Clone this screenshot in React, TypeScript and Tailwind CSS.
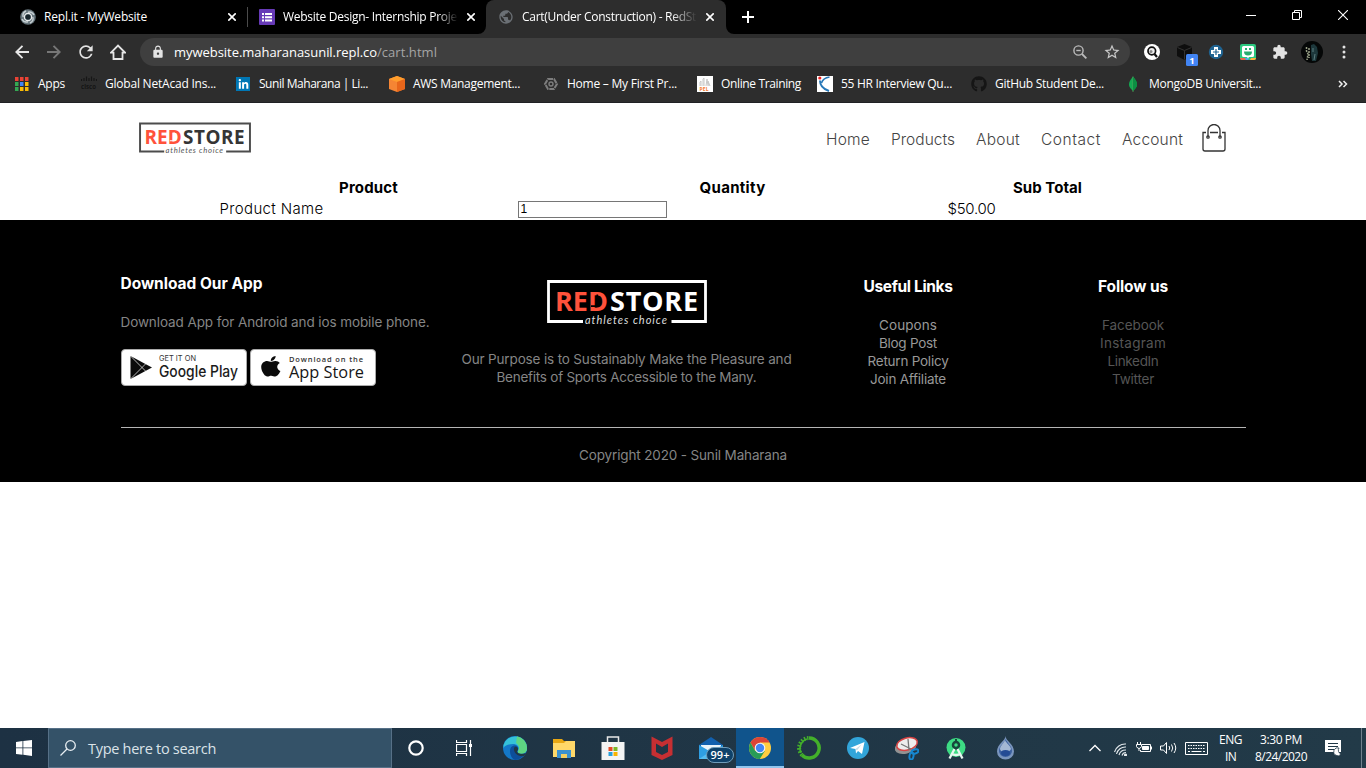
import React, { useLayoutEffect, useRef } from "react";
import { FaGithub, FaLinkedinIn } from "react-icons/fa";
import { MdExtension, MdLock, MdRefresh, MdStarBorder, MdPublic } from "react-icons/md";

/* Single-line label whose tracking is computed so that it fills a given width. */
function Fit({ w, className = "", children }: { w: number; className?: string; children: string }) {
  const ref = useRef<HTMLSpanElement>(null);
  useLayoutEffect(() => {
    const el = ref.current;
    if (!el) return;
    el.style.letterSpacing = "0px";
    const natural = el.getBoundingClientRect().width;
    el.style.letterSpacing = `${(w - natural) / children.length}px`;
  }, [w, children]);
  return (
    <span className={"block shrink-0 overflow-visible whitespace-nowrap " + className} style={{ width: w }}>
      <span ref={ref} className="inline-block">{children}</span>
    </span>
  );
}

const X = ({ className = "" }) => (
  <svg className={"size-2 shrink-0 " + className} viewBox="0 0 8 8" stroke="#fff" strokeWidth="1.6">
    <path d="M.3 .3 7.7 7.7M7.7 .3 .3 7.7" />
  </svg>
);

function TabStrip() {
  return (
    <div className="flex h-[34px] items-center bg-black text-white">
      <svg className="ml-5 size-4 shrink-0" viewBox="0 0 16 16">
        <circle cx="8" cy="8" r="7.8" fill="#65747b" />
        <path d="M8 3.200Q12 2 14 6M12.800 8Q14 12 10 14M8 12.800Q4 14 2 10M3.200 8Q2 4 6 2" fill="none" stroke="#c5ced1" strokeWidth="1.500" />
        <circle cx="8" cy="8" r="3.600" fill="none" stroke="#e8eced" strokeWidth="1.300" />
        <circle cx="8" cy="8" r="2.600" fill="#17252b" />
      </svg>
      <Fit w={103} className="ml-2">Repl.it - MyWebsite</Fit>
      <X className="ml-[81px]" />
      <div className="ml-[11px] h-5 w-px bg-[#4b4b4b]" />
      <svg className="ml-[11px] size-4 shrink-0" viewBox="0 0 16 16">
        <rect width="16" height="16" rx="1" fill="#673ab7" />
        <path d="M3 4h2v2H3zM3 7.2h2v2H3zM3 10.4h2v2H3zM6 4h7v2H6zM6 7.2h7v2H6zM6 10.4h7v2H6z" fill="#fff" />
      </svg>
      <div className="ml-2 w-[175px] overflow-hidden [mask-image:linear-gradient(to_right,#000_88%,transparent)]">
        <Fit w={174}>Website Design- Internship Proje</Fit>
      </div>
      <X className="ml-[9px]" />
      <svg className="ml-[3px] h-[34px] w-2 shrink-0" viewBox="0 0 8 34"><path d="M8 26v8H0a8 8 0 0 0 8-8z" fill="#2d2d2d" /></svg>
      <div className="flex h-full w-60 shrink-0 items-center rounded-t-lg bg-[#2d2d2d]">
        <MdPublic className="ml-3 size-4 shrink-0 text-[#6b7075]" />
        <div className="ml-2 w-[175px] overflow-hidden [mask-image:linear-gradient(to_right,#000_85%,transparent)]">
          <Fit w={174}>Cart(Under Construction) - RedSt</Fit>
        </div>
        <X className="ml-[9px]" />
      </div>
      <svg className="h-[34px] w-2 shrink-0" viewBox="0 0 8 34"><path d="M0 26v8h8a8 8 0 0 1-8-8z" fill="#2d2d2d" /></svg>
      <svg className="ml-2 size-3 shrink-0" viewBox="0 0 12 12"><path d="M6 0v12M0 6h12" stroke="#fff" strokeWidth="2" /></svg>
      <div className="ml-auto mb-[5px] flex items-center gap-9 pr-[18px]">
        <svg className="size-[10px]" viewBox="0 0 10 10"><path d="M0 5.5h10" stroke="#fff" /></svg>
        <svg className="size-[10px]" viewBox="0 0 10 10" fill="none" stroke="#fff"><path d="M.5 2.5h7v7h-7zM2.5 2.5v-2h7v7h-2" /></svg>
        <svg className="size-[10px]" viewBox="0 0 10 10"><path d="M0 0l10 10M10 0L0 10" stroke="#fff" strokeWidth="1.1" /></svg>
      </div>
    </div>
  );
}

function Toolbar() {
  return (
    <div className="flex h-9 items-center bg-[#2d2d2d] text-[#e3e3e3]">
      <svg className="ml-[15px] size-[14px] shrink-0" viewBox="0 0 14 14" fill="none" stroke="#e6e6e6" strokeWidth="1.9"><path d="M14 7H1.5M7.5.8 1.3 7l6.2 6.2" /></svg>
      <svg className="ml-[18px] size-[14px] shrink-0" viewBox="0 0 14 14" fill="none" stroke="#777" strokeWidth="1.9"><path d="M0 7h12.5M6.5.8 12.7 7l-6.2 6.2" /></svg>
      <MdRefresh className="ml-[15px] size-5 shrink-0" />
      <svg className="ml-[14px] size-4 shrink-0" viewBox="0 0 16 16" fill="none" stroke="#e6e6e6" strokeWidth="1.8"><path d="M1 8.6 8 1.6l7 7h-2.5V15h-9V8.6z" /></svg>
      <div className="ml-[14px] flex h-7 w-[990px] shrink-0 items-center rounded-full bg-[#3f3f3f]">
        <MdLock className="ml-[11px] size-[14px] shrink-0" />
        <Fit w={203} className="ml-[9px] text-[13px] text-white">mywebsite.maharanasunil.repl.co</Fit>
        <Fit w={60} className="text-[13px] text-[#a5a5a5]">/cart.html</Fit>
        <svg className="ml-auto size-[14px] shrink-0" viewBox="0 0 14 14" fill="none" stroke="#bbb" strokeWidth="1.4"><circle cx="5.5" cy="5.5" r="4.6" /><path d="M3.3 5.5h4.4" /><path d="M9 9l4.4 4.4" strokeWidth="1.8" /></svg>
        <MdStarBorder className="ml-4 mr-[9px] size-[18px] shrink-0 text-[#c8c8c8]" />
      </div>
      <svg className="ml-[14px] size-4 shrink-0" viewBox="0 0 16 16"><circle cx="8" cy="8" r="8" fill="#fff" /><circle cx="7.8" cy="7" r="3.8" fill="#eee" stroke="#111" strokeWidth="1.7" /><path d="M10.5 10 13 13" stroke="#111" strokeWidth="2.2" /><circle cx="7" cy="7.4" r="1.5" fill="#888" /></svg>
      <svg className="ml-[17px] mt-1 h-6 w-[22px] shrink-0" viewBox="0 0 22 24">
        <path d="M0 5 7.500 2 15 5v9l-7.500 4L0 14z" fill="#0e0e0e" /><path d="M.500 5.500l7 3 7-3M7.500 8.500v9" stroke="#333" fill="none" />
        <rect x="9" y="12" width="12" height="12" rx="1.500" fill="#4285f4" />
        <text x="15" y="21.500" textAnchor="middle" fontSize="9.500" fontWeight="700" fill="#fff" fontFamily="Open Sans">1</text>
      </svg>
      <svg className="ml-[9px] size-4 shrink-0" viewBox="0 0 16 16"><circle cx="8" cy="8" r="7.200" fill="#1f6391" /><path d="M6 3h4v3h3v4h-3v3H6v-3H3V6h3z" fill="#fff" /><path d="M8 5v6M5 8h6" stroke="#1f6391" strokeWidth="1.200" /></svg>
      <svg className="ml-4 size-4 shrink-0" viewBox="0 0 16 16"><rect width="16" height="16" rx="2" fill="#2bc77e" /><path d="M0 14h5l1 2H2q-2 0-2-2z" fill="#eb6549" /><path d="M5 14h4l-1 2H6z" fill="#49a7ee" /><path d="M11 14h5q0 2-2 2h-4z" fill="#ffb13b" /><path d="M3.500 2h9Q14 2 14 3.500v8q0 1.500-1.500 1.500H9l-1 1.500L7 13H3.500Q2 13 2 11.500v-8Q2 2 3.500 2z" fill="#fff" /><path d="M5 4h2v2H5zM9 4h2v2H9zM4 7.500h8a4 4 0 0 1-8 0z" fill="#27ad70" /></svg>
      <MdExtension className="ml-4 size-4 shrink-0" />
      <svg className="ml-[13px] size-[22px] shrink-0" viewBox="0 0 22 22"><circle cx="11" cy="11" r="11" fill="#050707" /><path d="M10 4l3-1 3 3 1 6-2 8h-4l-1-7z" fill="#1d383c" /><path d="M5.500 6v4l1.500 3-1 6M8 7v10" stroke="#98a086" strokeWidth="1.500" strokeDasharray="2 1" fill="none" /><path d="M12 7v4M14 13l-1 6" stroke="#5c7d7f" /></svg>
      <svg className="ml-[19px] h-4 w-1 shrink-0" viewBox="0 0 4 16" fill="#e3e3e3"><circle cx="2" cy="3" r="1.500" /><circle cx="2" cy="8" r="1.500" /><circle cx="2" cy="13" r="1.500" /></svg>
    </div>
  );
}

function AppsIcon() {
  const colors = ["#ea4335", "#ea4335", "#ea4335", "#34a853", "#4285f4", "#fbbc05", "#34a853", "#fbbc05", "#fbbc05"];
  return (
    <svg className="size-4 shrink-0" viewBox="0 0 16 16">
      {colors.map((c, i) => <rect key={i} x={1 + (i % 3) * 5} y={1 + Math.floor(i / 3) * 5} width="3.500" height="4" fill={c} />)}
    </svg>
  );
}

const bookmarks: { icon: React.ReactNode; w: number; label: string; ml: string }[] = [
  { ml: "ml-[14px]", w: 27, label: "Apps", icon: <AppsIcon /> },
  { ml: "ml-4", w: 111, label: "Global NetAcad Ins...", icon: (
    <svg className="size-4 shrink-0" viewBox="0 0 16 16"><path d="M.500 3v2M3 2v3M5.500 .500v4.500M8 2v3M10.500 .500v4.500M13 2v3M15.500 3v2" stroke="#161616" strokeWidth="1.200" /><text x="0" y="12.500" fontSize="7" fontWeight="700" textLength="15" lengthAdjust="spacingAndGlyphs" fill="#151515" fontFamily="Open Sans">cisco</text></svg>) },
  { ml: "ml-[19px]", w: 109, label: "Sunil Maharana | Li...", icon: <span className="flex size-4 shrink-0 items-center justify-center"><span className="flex size-[14px] items-center justify-center bg-[#0077b5]"><FaLinkedinIn className="size-[11px] text-white" /></span></span> },
  { ml: "ml-[21px]", w: 107, label: "AWS Management...", icon: (
    <svg className="size-4 shrink-0" viewBox="0 0 16 16"><path d="M0 3 8 0l8 3v10l-8 3-8-3z" fill="#f58534" /><path d="M0 3l8 3 8-3-8-3z" fill="#ff9d2c" /><path d="M8 6l8-3v10l-8 3z" fill="#e8661b" /></svg>) },
  { ml: "ml-[23px]", w: 110, label: "Home – My First Pr...", icon: (
    <svg className="size-4 shrink-0" viewBox="0 0 16 16" fill="none" stroke="#7d7d7d"><path d="M5 3h6l3 5-3 5H5L2 8z" strokeWidth="2" strokeDasharray="5 .8" /><circle cx="8" cy="8" r="2" strokeWidth="1.400" /></svg>) },
  { ml: "ml-5", w: 80, label: "Online Training", icon: (
    <svg className="size-4 shrink-0" viewBox="0 0 16 16"><path d="M0 0h16v16H0z" fill="#fff" /><path d="M3 10V6l1-1v5M6 10V3l1-1v8M9 10l1-7 1 7M12 10l-1-5 2 5" stroke="#c8c8c8" fill="none" /><text x="2.500" y="15" fontSize="5" fontWeight="700" textLength="9" fill="#f47b32" fontFamily="Open Sans">PEL</text></svg>) },
  { ml: "ml-4", w: 111, label: "55 HR Interview Qu...", icon: (
    <svg className="size-4 shrink-0" viewBox="0 0 16 16"><path d="M0 0h16v16H0z" fill="#fff" /><circle cx="2.800" cy="2" r="1.600" fill="#e22" /><path d="M12.500 1Q6 2 4.500 7" stroke="#2878b8" strokeWidth="1.600" fill="none" /><path d="M3 4.500Q3 12 12 15" stroke="#2878b8" strokeWidth="2" fill="none" /></svg>) },
  { ml: "ml-[19px]", w: 109, label: "GitHub Student De...", icon: <FaGithub className="size-4 shrink-0 text-[#151515]" /> },
  { ml: "ml-[21px]", w: 112, label: "MongoDB Universit...", icon: (
    <svg className="size-4 shrink-0" viewBox="0 0 16 16"><path d="M8 .500C5 4 4 6 4 8.500c0 2.500 1.500 4 4 6.500 2.500-2.500 4-4 4-6.500C12 6 11 4 8 .500z" fill="#13aa52" /><path d="M8 .500V16" stroke="#5a9d5c" strokeWidth=".8" /><path d="M8 1v14c2.500-2.500 4-4 4-6.500C12 6 11 4 8 1z" fill="#0c8f43" /></svg>) },
];

function Bookmarks() {
  return (
    <div className="flex h-[33px] items-center border-b border-[#202124] bg-[#2d2d2d] pb-[4px] text-white">
      {bookmarks.map((b) => (
        <div key={b.label} className={"flex shrink-0 items-center gap-2 " + b.ml}>
          {b.icon}
          <Fit w={b.w}>{b.label}</Fit>
        </div>
      ))}
      <svg className="ml-auto mr-[18px] size-[10px] shrink-0" viewBox="0 0 10 10" fill="none" stroke="#eee" strokeWidth="1.500"><path d="M1 2l3 3-3 3M5.500 2l3 3-3 3" /></svg>
    </div>
  );
}

function Logo({ dark = false, className = "" }: { dark?: boolean; className?: string }) {
  const ink = dark ? "#ffffff" : "#4c4c4c";
  const bg = dark ? "#000" : "#fff";
  return (
    <svg className={"shrink-0 overflow-visible " + className} viewBox="0 0 160 46">
      <path d="M36 41.500H1.500v-40h157v40H124.500" fill="none" stroke={ink} strokeWidth="2.800" />
      <g fontFamily="Open Sans, sans-serif" fontWeight="700" fontSize="27">
        <text x="8" y="30.500" textLength="53" lengthAdjust="spacingAndGlyphs" fill="#ff523b">RED</text>
        <text x="63" y="30.500" textLength="88" fill={dark ? "#fff" : "#353535"}>STORE</text>
      </g>
      <path d="M50.300 14.500v12.200M44 26.200h6" stroke={bg} strokeWidth="1.700" />
      <text x="38" y="44" textLength="82" fontSize="11" fontStyle="italic" fontWeight="400" fontFamily="Lato, sans-serif" fill={dark ? "#ddd" : "#555"}>athletes choice</text>
    </svg>
  );
}

function Nav() {
  const links: [string, number][] = [["Home", 44], ["Products", 64], ["About", 44], ["Contact", 60], ["Account", 61]];
  return (
    <header className="flex h-[74px] items-center pl-[139px] pr-[140px]">
      <Logo className="mb-[4px] h-[33px] w-28" />
      <nav className="ml-auto flex items-center gap-[21px] font-['Inter'] text-[15.5px] font-light text-[#444]">
        {links.map(([t, w]) => <Fit key={t} w={w}>{t}</Fit>)}
      </nav>
      <svg className="mb-[5px] ml-[19px] h-7 w-6 shrink-0" viewBox="0 0 24 28" fill="none" stroke="#333" strokeWidth="1.300">
        <path d="M4 8.500H1V25q0 2 2 2h18q2 0 2-2V8.500h-3M8 8.500h8M6 13V6.500a6 6 0 0 1 12 0V13" />
        <circle cx="6" cy="13" r="1.200" /><circle cx="18" cy="13" r="1.200" />
      </svg>
    </header>
  );
}

function CartTable() {
  return (
    <div className="grid h-[43px] grid-cols-[298px_430px_200px] grid-rows-[21px_22px] items-center pl-[219.500px] font-['Inter'] text-[15px] leading-[21px] text-black">
      <Fit w={59} className="justify-self-center font-bold">Product</Fit>
      <Fit w={66} className="justify-self-center font-bold">Quantity</Fit>
      <Fit w={69} className="justify-self-center font-bold">Sub Total</Fit>
      <Fit w={104} className="-mt-px font-light">Product Name</Fit>
      <input defaultValue="1" className="h-[17px] w-[149px] border border-[#767676] px-[2px] font-['Liberation_Sans'] text-[12px] leading-none" />
      <Fit w={48} className="-mt-px font-light">$50.00</Fit>
    </div>
  );
}

function Footer() {
  return (
    <footer className="h-[262px] bg-black px-[120.500px] pt-[54px] font-['Inter'] text-[13.500px] leading-[18px] text-[#858585]">
      <div className="-mx-0.5 grid h-[153px] grid-cols-[338px_340px_223px_227px]">
        <div className="pl-0.5">
          <Fit w={142} className="pt-px text-[15.500px] font-bold text-white">Download Our App</Fit>
          <Fit w={309} className="mt-5">Download App for Android and ios mobile phone.</Fit>
          <div className="mt-[18px] flex gap-[3px]">
            <svg className="h-[37px] w-[126px]" viewBox="0 0 126 37">
              <rect x=".5" y=".5" width="125" height="36" rx="3.500" fill="#fff" stroke="#aaa" />
              <path d="M9.500 7 31 18.500 9.500 30z" fill="#0b0b0b" /><path d="M9.500 7l15 15M9.500 30l15-15" stroke="#ddd" strokeWidth=".8" />
              <text x="38" y="12" fontSize="7.500" textLength="37" lengthAdjust="spacingAndGlyphs" fill="#333" fontFamily="Inter">GET IT ON</text>
              <text x="38" y="28" fontSize="15.500" fontWeight="500" textLength="79" fill="#1b1b1b" lengthAdjust="spacingAndGlyphs" fontFamily="Inter">Google Play</text>
            </svg>
            <svg className="h-[37px] w-[126px]" viewBox="0 0 126 37">
              <rect x=".5" y=".5" width="125" height="36" rx="3.500" fill="#fff" stroke="#aaa" />
              <path transform="translate(11 5.500) scale(.051 .046)" fill="#0b0b0b" d="M318.700 268.700c-.2-36.700 16.400-64.400 50-84.800-18.800-26.900-47.200-41.700-84.700-44.600-35.500-2.800-74.300 20.700-88.500 20.700-15 0-49.400-19.700-76.400-19.700C63.300 141.200 4 184.800 4 273.500q0 39.300 14.400 81.200c12.800 36.700 59 126.700 107.200 125.200 25.200-.6 43-17.900 75.800-17.900 31.800 0 48.300 17.900 76.400 17.900 48.600-.7 90.400-82.500 102.600-119.300-65.200-30.700-61.700-90-61.700-91.900zm-56.600-164.200c27.300-32.400 24.800-61.900 24-72.500-24.100 1.400-52 16.400-67.900 34.900-17.500 19.800-27.800 44.300-25.600 71.900 26.100 2 49.900-11.400 69.500-34.300z" />
              <text x="39" y="12.500" fontSize="7.500" fontWeight="600" textLength="74" fill="#333" fontFamily="Open Sans">Download on the</text>
              <text x="39" y="29" fontSize="16" fontWeight="500" textLength="75" lengthAdjust="spacingAndGlyphs" fill="#161616" fontFamily="Open Sans">App Store</text>
            </svg>
          </div>
        </div>
        <div className="flex flex-col items-center">
          <Logo dark className="mt-[6px] h-[46px] w-40" />
          <Fit w={330} className="mt-6">Our Purpose is to Sustainably Make the Pleasure and</Fit>
          <Fit w={260}>Benefits of Sports Accessible to the Many.</Fit>
        </div>
        <div className="flex flex-col items-center pt-1 text-[#989898]">
          <Fit w={89} className="mb-5 text-[15.500px] font-bold text-white">Useful Links</Fit>
          <Fit w={58}>Coupons</Fit>
          <Fit w={58}>Blog Post</Fit>
          <Fit w={81}>Return Policy</Fit>
          <Fit w={76}>Join Affiliate</Fit>
        </div>
        <div className="flex flex-col items-center pt-1 text-[#555]">
          <Fit w={70} className="mb-5 text-[15.500px] font-bold text-white">Follow us</Fit>
          <Fit w={62}>Facebook</Fit>
          <Fit w={66}>Instagram</Fit>
          <Fit w={51}>LinkedIn</Fit>
          <Fit w={42}>Twitter</Fit>
        </div>
      </div>
      <div className="h-px bg-[#b5b5b5]" />
      <Fit w={208} className="mx-auto mt-[18px]">Copyright 2020 - Sunil Maharana</Fit>
    </footer>
  );
}

const taskIcons: React.ReactNode[] = [
  <g key="edge"><circle cx="12" cy="12" r="12" fill="#1478c8" /><path d="M.5 9A12 12 0 0 1 24 12c0 4-3 6-6 6-3 0-4-1.500-3-3 2-3 0-7-5-7-4 0-8 1-9.500 4z" fill="#35c2d8" /><path d="M14 .2A12 12 0 0 1 24 12c0 4-3 6-6 6-3 0-4-1.500-3-3 2-3 1-6-2-8z" fill="#5ed582" /><path d="M7 15c0-3 1.500-5 4-5.500C14 9 16 12 14.500 14.500c-1 2 2 4.500 7.500 2.800C20 21 16.500 24 12 24c-3-1-5-5-5-9z" fill="#0d4e9a" /><path d="M11 12c1-2 4-1.500 4 1 0 1.500-1 1.500-1 2.500 0 2 4 3.500 9 1.500-.5 1.500-1.500 2.500-2 3-5 1.500-11-3-10-8z" fill="#203746" /></g>,
  <g key="files"><path d="M1 3h9l2 2h11v16H1z" fill="#e8a713" /><path d="M1 7h11l2-2h9v16H1z" fill="#ffd869" /><path d="M5 14h14v8h-4v-4H9v4H5z" fill="#3b91d0" /><path d="M9 18h6v4H9z" fill="#f5cf62" /></g>,
  <g key="store"><path d="M6.500 7V1h11v6" fill="none" stroke="#e8e8e8" strokeWidth="1.500" /><path d="M.500 6h23v18H.500z" fill="#f4f4f4" /><path d="M7.500 11h4v4h-4z" fill="#e64a25" /><path d="M12.500 11h4v4h-4z" fill="#7cb928" /><path d="M7.500 16h4v4h-4z" fill="#28a0dc" /><path d="M12.500 16h4v4h-4z" fill="#f9b400" /></g>,
  <path key="mcafee" d="M1.500.5 12 6 22.500.5V19L12 24 1.500 19zM6 7.500V16l6 3 6-3V7.500L12 11z" fill="#c62f32" fillRule="evenodd" />,
  <g key="mail"><path d="M0 9 12 1l12 8v14H0z" fill="#1260ae" /><path d="M2 9h20v8H2z" fill="#e9f3fa" /><path d="M0 9l12 7 12-7v14H0z" fill="#2f9fe3" /><path d="M0 23l12-8 12 8z" fill="#55bdf1" /></g>,
  <g key="chrome"><circle cx="12" cy="12" r="11" fill="#ffcd40" /><path d="M2.500 6.500A11 11 0 0 1 21.600 6.500H12L7.200 14.800z" fill="#db4437" /><path d="M2.500 6.500A11 11 0 0 0 11.800 23l5-8H7.200z" fill="#289c57" /><circle cx="12" cy="12" r="5.300" fill="#f4f4f4" /><circle cx="12" cy="12" r="4.200" fill="#4285f4" /></g>,
  <g key="anaconda" fill="none" stroke="#43b02a"><path d="M12 2a10 10 0 1 1-7 17" strokeWidth="3.500" /><path d="M5 19A10 10 0 0 1 12 2" strokeWidth="4" strokeDasharray="1.500 1.500" /><path d="M4 17A10 10 0 0 1 10 3" strokeWidth="1.500" /></g>,
  <g key="telegram"><circle cx="12" cy="12" r="11" fill="#32a5da" /><path d="M4 12 18.500 6 16 18l-4-3-2 2.500-.5-4.500z" fill="#fff" /><path d="M9.500 13l6-4.500-4.500 6" fill="#c7dce7" /></g>,
  <g key="snip"><ellipse cx="10.500" cy="11" rx="11" ry="6.500" transform="rotate(-15 11 11)" fill="#929292" /><ellipse cx="12" cy="8" rx="10.500" ry="6" transform="rotate(-15 12 8)" fill="#eee" stroke="#d74444" strokeWidth="1.500" /><path d="M6 8l10 5M13 3l1 11" stroke="#777" strokeWidth="1.300" /><g fill="none" stroke="#1686cf" strokeWidth="2"><ellipse cx="20" cy="15.500" rx="3.500" ry="2" transform="rotate(-15 20 15.500)" /><ellipse cx="16.500" cy="20" rx="2" ry="3.500" transform="rotate(10 16.500 20)" /></g></g>,
  <g key="studio"><circle cx="12" cy="11.500" r="9.500" fill="#3ddc84" /><circle cx="12" cy="9" r="3" fill="none" stroke="#17483d" strokeWidth="2.500" /><path d="M12 3v4M12 11v3" stroke="#17483d" strokeWidth="2" /><path d="M10.500 13 5.500 22.500M13.500 13l5 9.500M7 17.500q5 3 10 0" fill="none" stroke="#e8f6f0" strokeWidth="2.300" /></g>,
  <g key="drop"><path d="M12.500 0c0 5-8.500 8-8.500 15.500a8.500 8 0 0 0 17 0C21 8 12.500 5 12.500 0z" fill="#7a95bd" /><path d="M12.500 3c-1 4-6.500 7-6.500 12a6.500 6 0 0 0 13 0C19 10 14 7 12.500 3z" fill="#3b609f" /><path d="M12 4c-1 3-5 6-5 9 0 4 10 4 11 0 0-3-5-6-6-9z" fill="#a4b8d4" /><ellipse cx="12.500" cy="17" rx="4.500" ry="3" fill="#244b94" /></g>,
];

function Taskbar() {
  return (
    <div className="mt-auto flex h-10 items-center bg-gradient-to-r from-[#1d3143] to-[#223a48] font-['Open_Sans','Noto_Sans',sans-serif] text-white">
      <div className="flex w-12 shrink-0 justify-center">
        <svg className="size-4" viewBox="0 0 16 16" fill="#fff"><path d="M0 2l6.500-.9v6.400H0zM7.300 1 16 0v7.500H7.300zM0 8.300h6.500v6.500L0 14zM7.300 8.300H16V16l-8.700-1.200z" /></svg>
      </div>
      <div className="flex h-10 w-[344px] shrink-0 items-center border border-[#567087] bg-[#345268]">
        <svg className="ml-[11px] size-4" viewBox="0 0 16 16" fill="none" stroke="#e8eef2" strokeWidth="1.300"><circle cx="10.500" cy="5.500" r="4.800" /><path d="M7 9 .5 15.500" /></svg>
        <Fit w={128} className="ml-3 mt-px text-[14.500px] text-[#dbe3e8]">Type here to search</Fit>
      </div>
      <div className="flex w-12 shrink-0 justify-center"><svg className="size-4" viewBox="0 0 16 16"><circle cx="8" cy="8" r="6.700" fill="none" stroke="#fff" strokeWidth="2.200" /></svg></div>
      <div className="mr-[2px] flex w-12 shrink-0 justify-center"><svg className="size-4" viewBox="0 0 16 16" fill="none" stroke="#fff"><path d="M.5 4.500h10v7H.5zM.5 0v2.500h10V0M.5 16v-2.500h10V16M14.500 0v16" strokeWidth="1.200" /><path d="M13 4h3v3h-3z" fill="#fff" stroke="none" /></svg></div>
      {taskIcons.map((icon, i) => (
        <div key={i} className={"relative flex h-10 shrink-0 items-center justify-center " + (i === 5 ? "ml-px w-12 border-b-2 border-[#91c5ed] bg-[#10548c] pt-[2px]" : "w-[49px]")}>
          <svg className="size-6" viewBox="0 0 24 24">{icon}</svg>
          {i === 4 && <span className="absolute left-5 top-[19px] flex h-4 w-7 items-center justify-center rounded-full border border-[#6e9cba] bg-[#0e4169] text-[11px] font-semibold">99+</span>}
        </div>
      ))}
      <svg className="ml-auto h-2 w-3 shrink-0" viewBox="0 0 12 8"><path d="M.5 7 6 1.500 11.500 7" fill="none" stroke="#fff" strokeWidth="1.300" /></svg>
      <svg className="ml-[13px] mt-[3px] size-[13px] shrink-0" viewBox="0 0 13 13" fill="none" stroke="#e3e9ed" strokeWidth="1.100"><path d="M.5 9A11 11 0 0 1 12 1M2.500 11A9 9 0 0 1 12 4M5 12a7 7 0 0 1 7-5M8 12.500A4 4 0 0 1 12 9.500" /><circle cx="11.500" cy="12" r="1" fill="#fff" /></svg>
      <svg className="ml-[9px] h-3 w-4 shrink-0" viewBox="0 0 16 12" fill="none" stroke="#fff"><path d="M6 2.500h8.500v7H4.500V8M15.500 4.500v3" /><path d="M6.500 4.500h6v3h-6z" fill="#fff" /><path d="M.5 2.500h5v2q-1 2-2.500 2t-2.500-2zM1.500 0v2.500M4.500 0v2.500M3 6.500V9" /></svg>
      <svg className="ml-2 h-[14px] w-[17px] shrink-0" viewBox="0 0 17 14" fill="none" stroke="#fff"><path d="M.5 5h3l3-3.500v11L3.500 9h-3zM9 5q1.500 2 0 4M11.500 3.500q2.500 3.500 0 7M14 2q3.500 5 0 10" /></svg>
      <svg className="ml-2 h-[13px] w-[23px] shrink-0" viewBox="0 0 23 13" fill="none" stroke="#fff"><path d="M.5.500h22v12H.5z" /><path d="M3 3.500h17M3 6.500h17" strokeDasharray="1.500 1" strokeWidth="1.200" /><path d="M3 9.500h2M6.500 9.500h10M18 9.500h2" /></svg>
      <div className="ml-[11px] flex shrink-0 flex-col items-center text-[12px] leading-[17px]"><Fit w={23}>ENG</Fit><Fit w={11}>IN</Fit></div>
      <div className="ml-[13px] flex shrink-0 flex-col items-center text-[12px] leading-[17px]"><Fit w={42}>3:30 PM</Fit><Fit w={52}>8/24/2020</Fit></div>
      <svg className="ml-[18px] size-4 shrink-0" viewBox="0 0 16 16"><path d="M0 0h16v12h-5l-2 3v-3H0z" fill="#fff" /><path d="M3 3.500h10M3 6.500h10M3 9.500h6" stroke="#203746" /><path d="M14 8a4 4 0 1 0 2 6 4 4 0 0 1-2-6z" fill="#fff" stroke="#203746" strokeWidth=".8" /></svg>
      <div className="ml-5 mr-1 h-10 w-px shrink-0 bg-[#70818d]" />
    </div>
  );
}

export default function App() {
  return (
    <div className="flex h-[768px] w-[1366px] flex-col overflow-hidden bg-white font-['Open_Sans','Noto_Sans',sans-serif] text-[12px] leading-4">
      <TabStrip />
      <Toolbar />
      <Bookmarks />
      <Nav />
      <CartTable />
      <Footer />
      <Taskbar />
    </div>
  );
}
